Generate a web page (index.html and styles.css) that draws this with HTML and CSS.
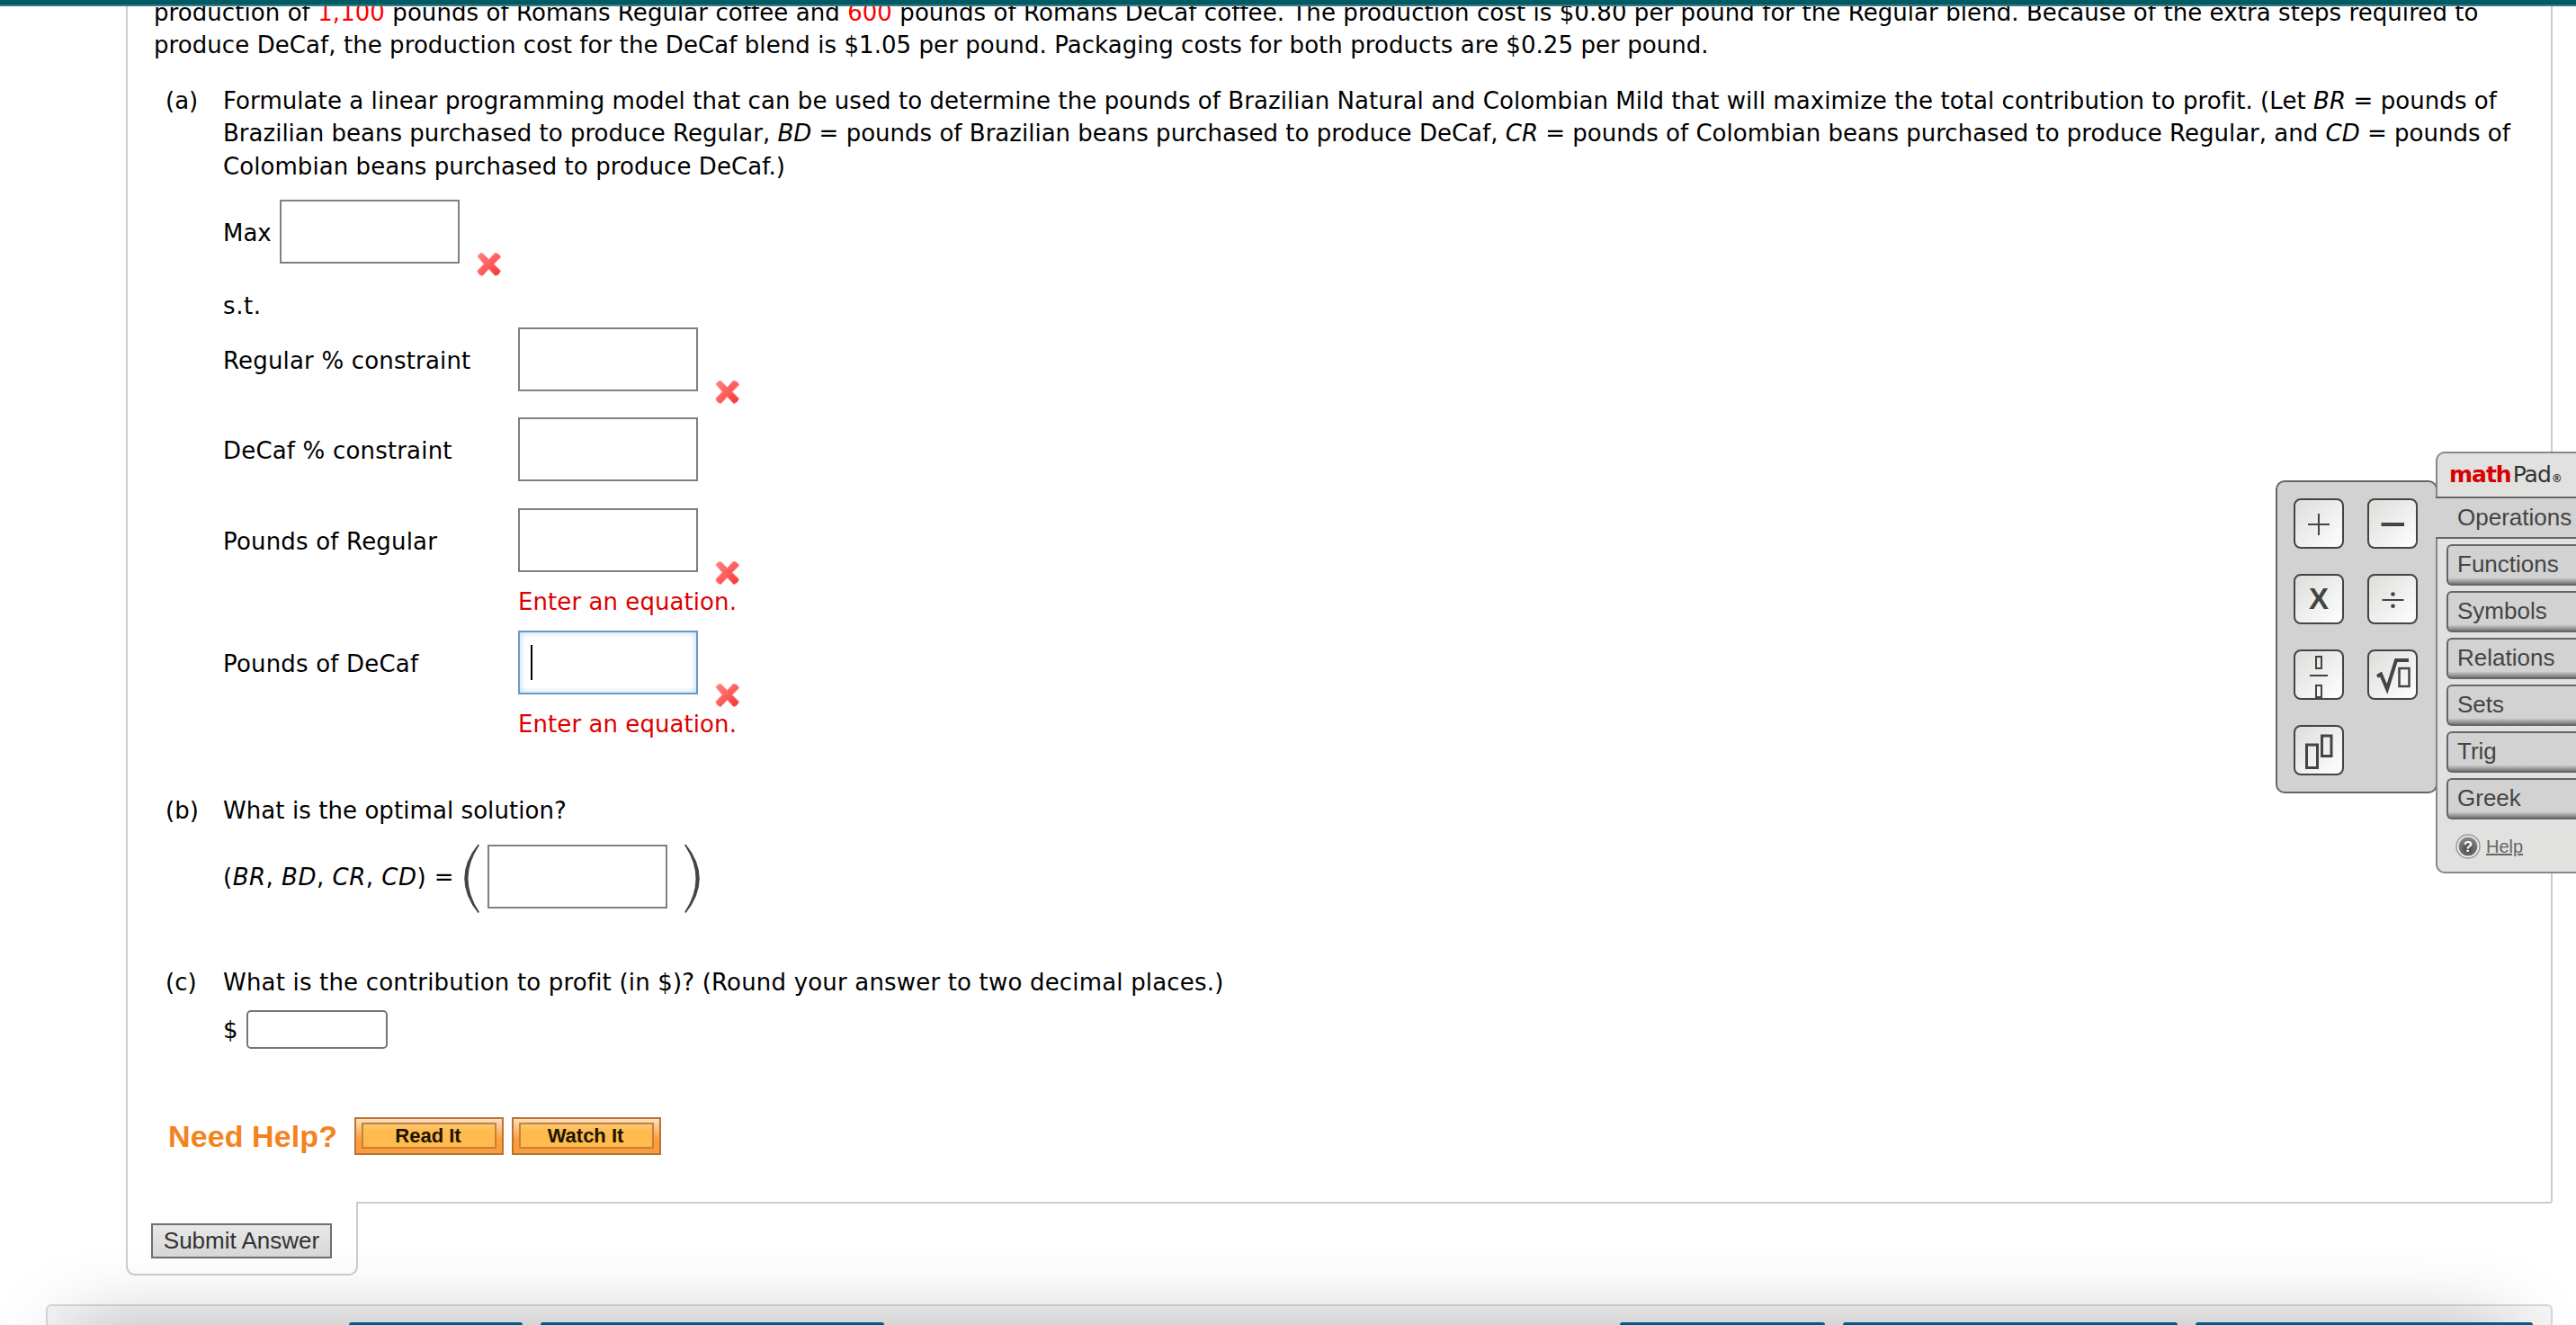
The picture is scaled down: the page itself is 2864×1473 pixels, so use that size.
FILE: index.html
```html
<!DOCTYPE html>
<html lang="en">
<head>
    <meta charset="UTF-8">
    <meta name="viewport" content="width=device-width, initial-scale=1.0">
    <title>Homework</title>
    <link rel="stylesheet" href="styles.css">
</head>
<body>
<div class="page">
    <svg class="defs">
        <linearGradient id="red" x1="0" y1="0" x2="1" y2="1">
            <stop offset="0" stop-color="#ff8585"/>
            <stop offset="0.6" stop-color="#ff5656"/>
            <stop offset="1" stop-color="#f52c2c"/>
        </linearGradient>
        <radialGradient id="gray" cx="0.5" cy="0.65" r="0.6">
            <stop offset="0" stop-color="#444"/>
            <stop offset="1" stop-color="#888"/>
        </radialGradient>
        <symbol id="wrong" viewBox="0 0 27 27">
            <path d="M1 5 Q4 0 7 2 L13.500 8.500 L20 1.500 Q25 1 26.500 6 L19 13.500 L26.500 21 Q25 26 20.500 26.500 L13.500 19 L6.500 26.500 Q2 26 0.800 21 L8 13.500 Z" fill="url(#red)" stroke="#ff8c8c" stroke-width="0.8"/>
        </symbol>
    </svg>

    <div class="topbar"></div>

    <div class="question">
        <div class="intro">
            <div class="line">production of <span class="rand">1,100</span> pounds of Romans Regular coffee and <span class="rand">600</span> pounds of Romans DeCaf coffee. The production cost is $0.80 per pound for the Regular blend. Because of the extra steps required to</div>
            <div class="line">produce DeCaf, the production cost for the DeCaf blend is $1.05 per pound. Packaging costs for both products are $0.25 per pound.</div>
        </div>

        <div class="part part-a">
            <div class="letter">(a)</div>
            <div class="body">
                <div class="line">Formulate a linear programming model that can be used to determine the pounds of Brazilian Natural and Colombian Mild that will maximize the total contribution to profit. (Let <i>BR</i> = pounds of</div>
                <div class="line tight">Brazilian beans purchased to produce Regular, <i>BD</i> = pounds of Brazilian beans purchased to produce DeCaf, <i>CR</i> = pounds of Colombian beans purchased to produce Regular, and <i>CD</i> = pounds of</div>
                <div class="line">Colombian beans purchased to produce DeCaf.)</div>

                <div class="row max">
                    <span class="text">Max</span>
                    <div class="mathbox"></div>
                    <svg class="mark"><use href="#wrong"/></svg>
                </div>
                <div class="line st">s.t.</div>
                <div class="row">
                    <span class="text label">Regular % constraint</span>
                    <div class="mathbox"></div>
                    <svg class="mark"><use href="#wrong"/></svg>
                </div>
                <div class="row last-plain">
                    <span class="text label">DeCaf % constraint</span>
                    <div class="mathbox"></div>
                </div>
                <div class="row">
                    <span class="text label">Pounds of Regular</span>
                    <div class="mathbox"></div>
                    <svg class="mark"><use href="#wrong"/></svg>
                </div>
                <div class="line error">Enter an equation.</div>
                <div class="row">
                    <span class="text label">Pounds of DeCaf</span>
                    <div class="mathbox active"><div class="caret"></div></div>
                    <svg class="mark"><use href="#wrong"/></svg>
                </div>
                <div class="line error">Enter an equation.</div>
            </div>
        </div>

        <div class="part part-b">
            <div class="letter">(b)</div>
            <div class="body">
                <div class="line">What is the optimal solution?</div>
                <div class="row solution">
                    <span class="text">(<i>BR</i>, <i>BD</i>, <i>CR</i>, <i>CD</i>) =</span>
                    <svg class="paren" viewBox="0 0 18 78"><path d="M15.500 0.500 Q-15 38.500 15.500 77 L17 76 Q-8 38.500 17 1.500 Z"/></svg>
                    <div class="mathbox"></div>
                    <svg class="paren" viewBox="0 0 18 78"><path d="M2.500 0.500 Q33 38.500 2.500 77 L1 76 Q26 38.500 1 1.500 Z"/></svg>
                </div>
            </div>
        </div>

        <div class="part part-c">
            <div class="letter">(c)</div>
            <div class="body">
                <div class="line wide">What is the contribution to profit (in $)? (Round your answer to two decimal places.)</div>
                <div class="row money">
                    <span class="text">$</span>
                    <input class="answer" type="text">
                </div>
            </div>
        </div>

        <div class="help">
            <span class="help-title">Need Help?</span>
            <button class="help-button"><span>Read It</span></button>
            <button class="help-button"><span>Watch It</span></button>
        </div>
    </div>

    <div class="bottom">
        <div class="submit-tab"><button class="submit">Submit Answer</button></div>
        <div class="bottom-line"></div>
    </div>

    <div class="footer">
        <div class="nav n1"></div>
        <div class="nav n2"></div>
        <div class="nav n3"></div>
        <div class="nav n4"></div>
        <div class="nav n5"></div>
    </div>
    <div class="shade"></div>

    <div class="mathpad">
        <div class="keys">
            <button class="key"><svg viewBox="0 0 52 52"><path d="M14 27H38M26 15V39" stroke-width="2"/></svg></button>
            <button class="key"><svg viewBox="0 0 52 52"><path d="M13.500 27H39" stroke-width="4"/></svg></button>
            <button class="key bold">X</button>
            <button class="key"><svg viewBox="0 0 52 52"><path d="M14.500 27H38.500" stroke-width="2"/><circle class="dot" cx="26.500" cy="20.500" r="2.300"/><circle class="dot" cx="26.500" cy="33.700" r="2.300"/></svg></button>
            <button class="key"><svg viewBox="0 0 52 52"><path d="M16 27H36" stroke-width="2"/><path d="M23 6H29V19H23ZM23 38H29V51H23Z" stroke-width="2"/></svg></button>
            <button class="key"><svg viewBox="0 0 52 52"><path d="M9 28L13 25.500L20 42L30 10H44" stroke-width="4"/><path d="M33.500 19H44.500V39H33.500Z" stroke-width="2.500"/></svg></button>
            <button class="key"><svg viewBox="0 0 52 52"><path d="M12.500 20H24.500V45.500H12.500Z" stroke-width="3"/><path d="M29.500 10H40V32.500H29.500Z" stroke-width="3"/></svg></button>
        </div>
        <div class="panel">
            <div class="brand"><b>math</b><span>Pad</span><small>®</small></div>
            <div class="current">Operations</div>
            <div class="tabs">
                <div class="tab">Functions</div>
                <div class="tab">Symbols</div>
                <div class="tab">Relations</div>
                <div class="tab">Sets</div>
                <div class="tab">Trig</div>
                <div class="tab">Greek</div>
            </div>
            <div class="pad-help">
                <svg class="help-icon" viewBox="0 0 28 28"><circle cx="14" cy="14" r="13" fill="#eee" stroke="#999" stroke-width="1.500"/><circle cx="14" cy="14" r="10.500" fill="url(#gray)"/><text x="14" y="20" text-anchor="middle">?</text></svg>
                <a href="#">Help</a>
            </div>
        </div>
    </div>
</div>
</body>
</html>
```

FILE: styles.css
```css
* {
    box-sizing: border-box;
}
body {
    margin: 0;
    background: #fff;
    color: #000;
    font-family: Verdana, "DejaVu Sans", sans-serif;
    font-size: 26px;
    line-height: 36.4px;
}
.page {
    position: relative;
    height: 1473px;
    overflow: hidden;
}
button, input {
    margin: 0;
    padding: 0;
}
.defs {
    position: absolute;
    width: 0;
    height: 0;
}
.topbar {
    position: absolute;
    top: 0;
    left: 0;
    width: 100%;
    height: 7px;
    background: #005a63;
    border-bottom: 2px solid #337c83;
    z-index: 5;
}
.question {
    display: flow-root;
    width: 2698px;
    height: 1336px;
    margin-left: 140px;
    padding-left: 29px;
    border-left: 2px solid #ccc;
    border-right: 2px solid #ccc;
}
.line, .text {
    white-space: nowrap;
}
.line {
    height: 36.4px;
    letter-spacing: 0.07px;
}
.line.tight {
    letter-spacing: 0.01px;
}
.line.wide {
    letter-spacing: 0.18px;
}
.rand {
    color: #f00;
}
.intro {
    height: 98px;
    margin-top: -4px;
}
.part {
    display: flex;
}
.part-a {
    height: 789px;
}
.part-b {
    height: 191px;
}
.part-c {
    height: 168px;
}
.letter {
    width: 65px;
    padding-left: 13px;
    margin-right: 12px;
}
.row {
    display: flex;
    height: 71px;
    margin-bottom: 29px;
}
.row .text {
    padding-top: 19px;
}
.row .label {
    width: 328px;
    letter-spacing: 0.18px;
}
.last-plain {
    margin-bottom: 30px;
}
.mathbox {
    width: 200px;
    height: 71px;
    border: 2px solid #808080;
    background: #fff;
}
.mathbox.active {
    border-color: #6b9bc3;
    box-shadow: inset 0 0 7px #b5d3f5;
    padding: 14px 0 0 12px;
}
.caret {
    width: 2px;
    height: 39px;
    background: #000;
}
.mark {
    width: 27px;
    height: 27px;
    margin: 58px 0 0 19px;
}
.max {
    margin-top: 19px;
}
.max .text {
    width: 63px;
}
.st {
    margin-bottom: 5.4px;
    letter-spacing: 0.6px;
}
.line.error {
    height: 50px;
    margin: -14px 0 0 328px;
    color: #d00;
}
.solution {
    margin-top: 18.6px;
}
.solution .text {
    width: 268px;
    letter-spacing: 0.5px;
}
.solution .mathbox {
    margin: 1px 18px 0 8px;
}
.paren {
    width: 18px;
    height: 78px;
    fill: #444;
}
.money {
    margin-top: 12.6px;
}
.money .text {
    width: 26px;
    padding-top: 4px;
}
.answer {
    width: 157px;
    height: 43px;
    border: 2px solid #767676;
    border-radius: 5px;
}
.help {
    display: flex;
    align-items: center;
    height: 42px;
    margin-left: 16px;
    font-family: "Liberation Sans", Arial, sans-serif;
}
.help-title {
    width: 207px;
    color: #f58220;
    font-size: 34px;
    font-weight: bold;
    letter-spacing: 0.1px;
    white-space: nowrap;
}
.help-button {
    width: 166px;
    height: 42px;
    margin-right: 9px;
    padding: 4px 6px 5px;
    border: 2px solid #b87430;
    background: linear-gradient(#fde0c0, #fd9c3c 60%);
}
.help-button span {
    display: block;
    height: 29px;
    padding-right: 2px;
    border: 2px solid #c4823a;
    background: linear-gradient(#fdc878, #ffbb4d 30%);
    color: #1c1400;
    font: bold 22px/26px "Liberation Sans", Arial, sans-serif;
}
.bottom {
    display: flex;
    height: 114px;
    padding-left: 140px;
}
.submit-tab {
    width: 258px;
    height: 82px;
    padding: 24px 0 0 26px;
    border: 2px solid #ccc;
    border-top: 0;
    border-radius: 0 0 10px 10px;
}
.submit {
    display: block;
    width: 201px;
    height: 39px;
    border: 2px solid #707070;
    background: linear-gradient(#e8e8e8, #d8d8d8);
    color: #333;
    font: 26px/35px "Liberation Sans", Arial, sans-serif;
}
.bottom-line {
    width: 2440px;
    height: 12px;
    border: 2px solid #ccc;
    border-width: 2px 2px 0 0;
    border-color: #ccc transparent;
}
.footer {
    display: flex;
    width: 2787px;
    height: 23px;
    margin-left: 51px;
    padding: 18px 0 0 335px;
    border: 2px solid #d8d8d8;
    border-bottom: 0;
    border-radius: 6px 6px 0 0;
    background: #f6f6f6;
}
.nav {
    position: relative;
    height: 3px;
    border-radius: 4px 4px 0 0;
    background: #005a8c;
    z-index: 1;
}
.n1 {
    width: 193px;
    margin-right: 20px;
}
.n2 {
    width: 382px;
    margin-right: 818px;
}
.n3 {
    width: 228px;
    margin-right: 20px;
}
.n4 {
    width: 372px;
    margin-right: 20px;
}
.n5 {
    width: 375px;
}
/* soft shadow of the sheet that sits just under the window edge */
.shade {
    position: absolute;
    left: 80px;
    top: 1480px;
    width: 2704px;
    height: 100px;
    box-shadow: 0 0 90px rgba(0, 0, 0, 0.3);
}
.mathpad {
    position: absolute;
    top: 502px;
    right: 0;
    display: flex;
    color: #444;
    font-family: "Liberation Sans", Arial, sans-serif;
}
.keys {
    display: grid;
    grid-template-columns: 56px 56px;
    grid-auto-rows: 56px;
    gap: 28px 26px;
    width: 180px;
    height: 348px;
    margin-top: 32px;
    padding: 18px;
    border: 2px solid #666;
    border-radius: 10px;
    background: #d2d2d2;
}
.key {
    width: 56px;
    height: 56px;
    border: 2px solid #444;
    border-radius: 8px;
    background: linear-gradient(135deg, #ddddda, #fff);
    color: #444;
}
.key svg {
    display: block;
    width: 52px;
    height: 52px;
    fill: none;
    stroke: #444;
}
.key .dot {
    fill: #444;
    stroke: none;
}
.key.bold {
    font: bold 33px "Liberation Sans", Arial, sans-serif;
}
.panel {
    width: 156px;
    height: 469px;
    margin-left: -2px;
    border: 2px solid #888;
    border-right: 0;
    border-radius: 10px 0 0 10px;
    background: #e1e1df;
}
.brand {
    height: 48px;
    padding-left: 13px;
    font: 25px/48px "DejaVu Sans", sans-serif;
    letter-spacing: -1px;
    white-space: nowrap;
}
.brand b {
    margin-right: 2px;
    color: #d80000;
}
.brand span {
    color: #333;
}
.brand small {
    margin-left: 1px;
    font-size: 12px;
    font-weight: bold;
}
.current {
    height: 47px;
    margin-left: -2px;
    padding-left: 24px;
    border-top: 2px solid #666;
    border-bottom: 2px solid #666;
    background: #d2d2d2;
    font-size: 26px;
    line-height: 42px;
}
.tabs {
    padding: 6px 0 0 10px;
}
.tab {
    height: 46px;
    margin-bottom: 6px;
    padding-left: 10px;
    border: 2px solid #666;
    border-right: 0;
    border-radius: 6px 0 0 6px;
    background: linear-gradient(#d2d2d2 84%, #777);
    font-size: 26px;
    line-height: 41px;
}
.pad-help {
    display: flex;
    align-items: center;
    padding: 6px 0 0 20px;
    font-size: 20px;
}
.pad-help a {
    margin-left: 6px;
    color: #666;
}
.help-icon {
    width: 28px;
    height: 28px;
}
.help-icon text {
    fill: #fff;
    font: bold 17px "Liberation Sans", Arial, sans-serif;
}
```
